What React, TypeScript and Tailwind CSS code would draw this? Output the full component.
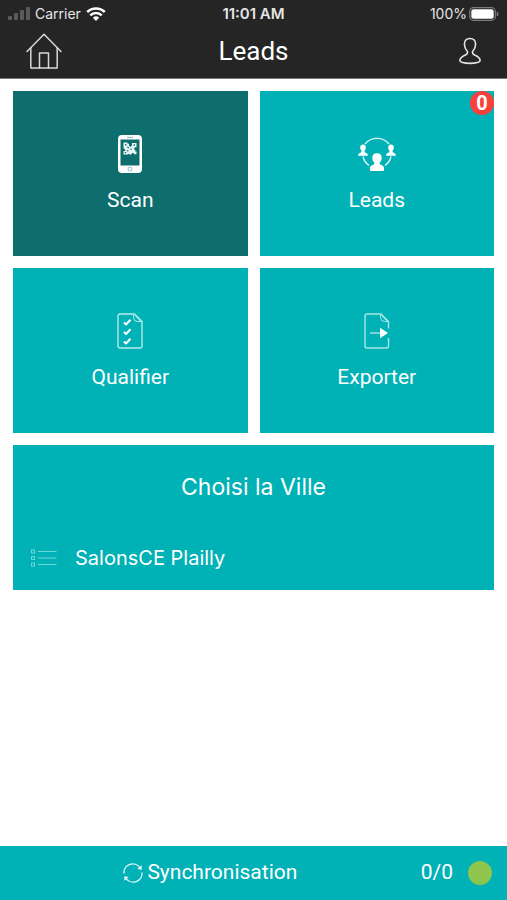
import type { ReactNode } from "react";

function HomeIcon() {
  return (
    <svg width="36" height="36" viewBox="0 0 36 36" fill="none" stroke="#d8d8d8" strokeWidth="1.5" strokeLinejoin="round" strokeLinecap="round">
      <path d="M1 18.500 18 1.200 35 18.500" />
      <path d="M4.800 15v20h26.400V15" />
      <path d="M13.500 35V20h9v15" />
    </svg>
  );
}

function UserIcon() {
  return (
    <svg width="22" height="28" viewBox="1 0 22 28" fill="none" stroke="#e4e4e4" strokeWidth="1.6" strokeLinejoin="round">
      <path d="M12 1.500c-3.600 0-5.600 2.400-5.600 5.800 0 3.200 1.200 5.300 3 7.200.4 1.700-.2 2.600-1.500 3.200-2.500 1.100-5.700 2.300-6 5.300-.2 2.300 4.300 3.400 10.100 3.400s10.300-1.100 10.100-3.400c-.3-3-3.500-4.200-6-5.300-1.300-.6-1.900-1.500-1.500-3.200 1.800-1.900 3-4 3-7.200 0-3.400-2-5.800-5.600-5.800Z" />
    </svg>
  );
}

function SignalIcon() {
  return (
    <svg width="22" height="14" viewBox="0 0 22 14" fill="#5a5a5a">
      <rect x="0" y="9" width="4" height="4" rx="1" />
      <rect x="6" y="6" width="4" height="7" rx="1" />
      <rect x="12" y="3" width="4" height="10" rx="1" />
      <rect x="18" y="0" width="4" height="13" rx="1" />
    </svg>
  );
}

function WifiIcon() {
  return (
    <svg width="20" height="14" viewBox="0 0 20 14" fill="none" stroke="#fff" strokeWidth="2.5">
      <path d="M1.200 5a12.500 12.500 0 0 1 17.600 0" />
      <path d="M4.300 8.300a8 8 0 0 1 11.400 0" />
      <path d="M10 14 6.900 10.800a4.500 4.500 0 0 1 6.200 0Z" fill="#fff" stroke="none" />
    </svg>
  );
}

function BatteryIcon() {
  return (
    <svg width="30" height="14" viewBox="0 0 30 14" fill="none">
      <rect x="0.7" y="0.7" width="25.6" height="12.6" rx="3.8" stroke="#7c7c7c" strokeWidth="1.2" />
      <rect x="2.3" y="2.3" width="22.4" height="9.4" rx="2.5" fill="#fff" />
      <path d="M27.700 4.500c1.300.6 1.800 1.500 1.800 2.500s-.5 1.900-1.800 2.500Z" fill="#7c7c7c" />
    </svg>
  );
}

function ScanIcon() {
  return (
    <svg width="24" height="38" viewBox="0 0 24 38">
      <path fill="#fff" fillRule="evenodd" d="M4 0h16a4 4 0 0 1 4 4v30a4 4 0 0 1-4 4H4a4 4 0 0 1-4-4V4a4 4 0 0 1 4-4ZM2.500 4.500v26h19v-26Z" />
      <path stroke="#0e6e6e" strokeWidth="0.5" d="M9 2.400h6" />
      <rect x="10.2" y="32.2" width="3.6" height="3.6" rx="0.8" fill="none" stroke="#0e6e6e" strokeWidth="0.4" />
      <path fill="#e9f6f5" d="M5.500 7.500h4v1.200H11v2l1.500 1.200 1.500-1.600V8h4.500v4.200H17l-1.200 1.800 1.500 1v1.500h1.200v2.700h-2.700V18h-1.500l-1.800 2-1.500-1.200-1.500.7H5.500v-3.600h2l-1-2.100-1-.5Z" />
      <path fill="#0e6e6e" d="M7 9h1.400v1.400H7ZM15.600 9.300H17v1.400h-1.400ZM6.800 17h1.400v1.300H6.800ZM9.700 11.300l1.600 1.500-.9.700-1.400-1.200ZM13.200 13.300l1 .8-1.500 1-.6-.7ZM9 15l1.600.8-.5 1-1.400-.7Z" />
    </svg>
  );
}

function LeadsIcon() {
  return (
    <svg width="38" height="34" viewBox="0 0 38 34" fill="#fff">
      <g fill="none" stroke="#d9f5f5" strokeWidth="1.4">
        <path d="M7 7A15.600 15.600 0 0 1 31 7" />
        <path d="M5 19.500a15 15 0 0 0 6 9" />
        <path d="M33 19.500a15 15 0 0 1-6 9" />
      </g>
      <path d="M5 7.500c1.900 0 3 1.300 2.800 3.300-.1 1.400-.6 2.200-1.200 2.900v1.500c1.500.6 3.200 1 3.400 3.600H0c.2-2.600 1.900-3 3.400-3.600v-1.500c-.6-.7-1.100-1.500-1.200-2.900C2 8.800 3.100 7.500 5 7.500Z" />
      <path d="M33 7.500c1.900 0 3 1.300 2.800 3.300-.1 1.400-.6 2.200-1.200 2.900v1.500c1.500.6 3.200 1 3.400 3.600H28c.2-2.600 1.900-3 3.400-3.600v-1.500c-.6-.7-1.100-1.500-1.200-2.900-.2-2 .9-3.300 2.800-3.300Z" />
      <path d="M19 16.200c3.200 0 4.900 2 4.700 4.900-.1 2.200-1 3.500-2 4.500v1.700c1.800 1 4.400 1.300 4.400 4.200 0 1.900-.4 2.500-1.400 2.500H13.300c-1 0-1.400-.6-1.400-2.500 0-2.900 2.600-3.200 4.400-4.200v-1.700c-1-1-1.900-2.300-2-4.500-.2-2.900 1.500-4.900 4.700-4.900Z" />
    </svg>
  );
}

function QualifyIcon() {
  return (
    <svg width="26" height="36" viewBox="0 0 26 36" fill="none" stroke="#b5ecec" strokeWidth="1.4" strokeLinejoin="round">
      <path d="M3 1h14.500L25 8.500V33a2 2 0 0 1-2 2H3a2 2 0 0 1-2-2V3a2 2 0 0 1 2-2Z" />
      <path d="M16.500 2v2.500a4 4 0 0 0 4 4H24M18 2.500l5.500 5.500" strokeWidth="1" />
      <path stroke="#fff" strokeWidth="2" d="m7 9.500 2 2 4.500-4.700M7 19l2 2 4.500-4.700M7 28.500l2 2 4.500-4.700" />
    </svg>
  );
}

function ExportIcon() {
  return (
    <svg width="26" height="36" viewBox="0 0 26 36" fill="none" stroke="#a8e6e7" strokeWidth="1.4" strokeLinejoin="round">
      <path d="M24.500 15.500V8.500L17 1H3a2 2 0 0 0-2 2v30a2 2 0 0 0 2 2h19.500a2 2 0 0 0 2-2v-8" />
      <path d="M16.500 2v2.500a4 4 0 0 0 4 4h3M17.500 2.500l5.500 5.500" strokeWidth="1" />
      <path d="M6 20h11" />
      <path d="m16 14.800 8 5.200-8 5.200Z" fill="#fff" stroke="none" />
    </svg>
  );
}

function ListIcon() {
  return (
    <svg width="26" height="18" viewBox="0 0 26 18" fill="none" stroke="#72d4d6" strokeWidth="1">
      <rect x="0.5" y="1" width="3" height="3" />
      <rect x="0.5" y="7.5" width="3" height="3" />
      <rect x="0.5" y="14" width="3" height="3" />
      <path d="M7 2.500h18.500M7 9h18.500M7 15.500h18.500" />
    </svg>
  );
}

function SyncIcon() {
  return (
    <svg width="20" height="20" viewBox="0 0 20 20" fill="none" stroke="#d9f6f6" strokeWidth="1.4">
      <path d="M1 10.500A8.800 8.800 0 0 1 17 4.700" />
      <path d="M19 9.500A8.800 8.800 0 0 1 3 15.300" />
      <path d="M18.700 2.200v4.600l-4.400-.8Z" fill="#e8fafa" stroke="none" />
      <path d="M1.300 17.800v-4.600l4.400.8Z" fill="#e8fafa" stroke="none" />
    </svg>
  );
}

type Tile = { label: string; icon: ReactNode; active?: boolean; badge?: number };

const TILES: Tile[] = [
  { label: "Scan", icon: <ScanIcon />, active: true },
  { label: "Leads", icon: <LeadsIcon />, badge: 0 },
  { label: "Qualifier", icon: <QualifyIcon /> },
  { label: "Exporter", icon: <ExportIcon /> },
];

function TileButton({ label, icon, active, badge }: Tile) {
  return (
    <button
      type="button"
      className={`relative flex flex-col items-center px-2 pt-[41px] pb-[42px] text-white ${active ? "bg-[#0e6e6e]" : "bg-[#00b1b6]"}`}
    >
      <span className="flex h-11 items-center justify-center">{icon}</span>
      <span className="mt-2.5 text-[21px] leading-7">{label}</span>
      {badge !== undefined && (
        <span className="absolute top-0 right-0 flex size-6 items-center justify-center rounded-full bg-[#fb3f3b] text-xl font-bold">
          {badge}
        </span>
      )}
    </button>
  );
}

export default function App() {
  return (
    <div className="flex min-h-screen flex-col bg-white font-['Roboto',sans-serif]">
      <header className="border-b border-[#777] bg-[#252525] text-white">
        <div className="grid grid-cols-3 items-center px-2 pt-1 font-['Inter',sans-serif] text-sm leading-5 text-[#e4e4e4]">
          <div className="flex items-center gap-[5px]">
            <SignalIcon />
            <span>Carrier</span>
            <WifiIcon />
          </div>
          <span className="text-center text-[15px] font-semibold">11:01 AM</span>
          <div className="flex items-center justify-end gap-0.5">
            <span>100%</span>
            <BatteryIcon />
          </div>
        </div>
        <div className="flex h-[54px] items-center justify-between px-[26px]">
          <a href="#home" aria-label="Accueil">
            <HomeIcon />
          </a>
          <h1 className="text-[26px] leading-8">Leads</h1>
          <a href="#profile" aria-label="Profil" className="flex w-9 justify-end">
            <UserIcon />
          </a>
        </div>
      </header>

      <main className="flex-1 px-[13px] py-3">
        <div className="grid grid-cols-2 gap-3">
          {TILES.map((tile) => (
            <TileButton key={tile.label} {...tile} />
          ))}
        </div>

        <section className="mt-3 bg-[#00b1b6] px-[18px] pt-6 pb-4 font-['Inter',sans-serif] text-white">
          <h2 className="text-center text-[23px] leading-9">Choisi la Ville</h2>
          <button type="button" className="mt-[37px] flex items-center gap-[18px] text-xl leading-8">
            <ListIcon />
            SalonsCE Plailly
          </button>
        </section>
      </main>

      <footer className="flex h-[54px] items-center bg-[#00b1b6] pr-[15px] text-[21px] text-white">
        <button type="button" className="flex flex-1 items-center justify-center gap-1">
          <SyncIcon />
          Synchronisation
        </button>
        <span>0/0</span>
        <span className="ml-[15px] size-6 rounded-full bg-[#8fc54d]" />
      </footer>
    </div>
  );
}
